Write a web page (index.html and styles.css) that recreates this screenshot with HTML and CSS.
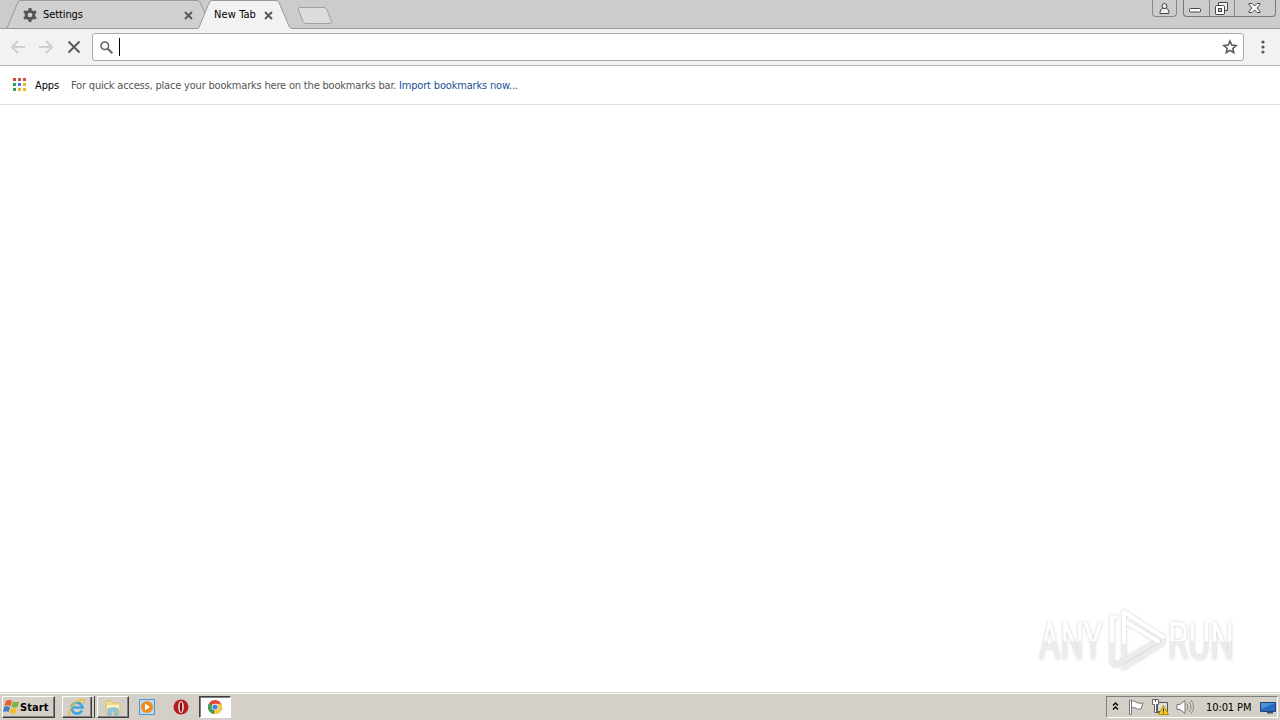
FILE: index.html
```html
<!DOCTYPE html>
<html lang="en">
<head>
  <meta charset="UTF-8">
  <title>New Tab</title>
  <link rel="stylesheet" href="styles.css">
</head>
<body>

  <header class="tabstrip">
    <div class="tab tab-settings">
      <svg class="tab-shape" width="206" height="29" viewBox="0 0 206 29"><path d="M0 28.5H2.500Q4 28.500 5 26L15 2Q16 .5 18 .5H194Q196 .5 197 2L203 15L197.500 28.500Z" fill="#d0d0d0" stroke="#999"/></svg>
      <svg class="gear" width="14" height="14" viewBox="0 0 14 14"><circle cx="7" cy="7" r="3.800" fill="none" stroke="#555" stroke-width="3"/><path d="M7 0v3M7 11v3M1 3.500l2.500 1.500M10.500 9l2.500 1.500M1 10.500l2.500-1.500M10.500 5l2.500-1.500" stroke="#555" stroke-width="3"/></svg>
      <span class="tab-title">Settings</span>
      <svg class="tab-close" width="9" height="9" viewBox="0 0 9 9"><path d="M1 1l7 7M8 1l-7 7"/></svg>
    </div>
    <div class="tab tab-new">
      <svg class="tab-shape" width="94" height="29" viewBox="0 0 94 29"><path d="M0 29L1 27.500L11 3Q12 .5 14 .5H78Q80 .5 81 2.500L91 26Q92 28.500 94 28.500V29Z" fill="#f2f2f2"/><path d="M0 28.500L1 27.500L11 3Q12 .5 14 .5H78Q80 .5 81 2.500L91 26Q92 28.500 94 28.500" fill="none" stroke="#999"/></svg>
      <span class="tab-title">New Tab</span>
      <svg class="tab-close" width="9" height="9" viewBox="0 0 9 9"><path d="M1 1l7 7M8 1l-7 7"/></svg>
    </div>
    <svg class="add-tab" width="36" height="18" viewBox="0 0 36 18"><path d="M3 .5H27Q29 .5 30 2.500L34.500 14.500Q35 16.500 33 16.500H9Q7 16.500 6 14.500L1.500 3Q.5 .5 3 .5Z" fill="#dcdcdc" stroke="#a0a0a0"/></svg>

    <div class="profile">
      <svg width="13" height="13" viewBox="0 0 13 13"><path d="M4.500 6.500Q2 7 2 10.500V11.500H11V10.500Q11 7 8.500 6.500Z" fill="#eee" stroke="#444"/><circle cx="6.500" cy="4" r="2.500" fill="#eee" stroke="#444"/></svg>
    </div>
    <div class="controls">
      <div class="control"><svg width="13" height="16"><rect x=".5" y="8.500" width="11" height="3.500" rx="1" fill="#fff" stroke="#444"/></svg></div>
      <div class="control"><svg width="13" height="16"><path d="M3.500 5V2.500H12.500V10.500H9" fill="#eee" stroke="#444"/><rect x=".5" y="5.500" width="9" height="9" rx="1" fill="#fff" stroke="#444"/><rect x="3.500" y="8.500" width="3" height="3" fill="#bbb" stroke="#444"/></svg></div>
      <div class="control"><svg width="13" height="16"><path d="M1 3.500H4L6.500 6L9 3.500H12V4.500L9 8L12 11.500V12.500H9L6.500 10L4 12.500H1V11.500L4 8L1 4.500Z" fill="#fff" stroke="#444"/></svg></div>
    </div>
  </header>

  <nav class="toolbar">
    <svg width="16" height="16" viewBox="0 0 16 16"><path d="M15 8H2M8 2L2 8l6 6" fill="none" stroke="#d0d0d0" stroke-width="2"/></svg>
    <svg width="16" height="16" viewBox="0 0 16 16"><path d="M1 8h13M8 2l6 6-6 6" fill="none" stroke="#d0d0d0" stroke-width="2"/></svg>
    <svg width="16" height="16" viewBox="0 0 16 16"><path d="M2.500 2.500l11 11M13.500 2.500l-11 11" stroke="#555" stroke-width="1.800"/></svg>
    <div class="omnibox">
      <svg width="13" height="13" viewBox="0 0 13 13"><circle cx="4.800" cy="4.800" r="3.800" fill="none" stroke="#666" stroke-width="1.600"/><path d="M7.500 7.500l4.800 4.800" stroke="#666" stroke-width="2"/></svg>
      <span class="caret"></span>
      <svg class="star" width="16" height="16" viewBox="0 0 16 16"><path d="M8 2l1.700 4.100 4.500.4-3.400 2.900 1 4.300L8 11.400l-3.800 2.300 1-4.300-3.400-2.900 4.500-.4Z" fill="none" stroke="#555" stroke-width="1.500"/></svg>
    </div>
    <svg class="menu" width="4" height="14" viewBox="0 0 4 14"><g fill="#555"><circle cx="2" cy="2" r="1.600"/><circle cx="2" cy="7" r="1.600"/><circle cx="2" cy="12" r="1.600"/></g></svg>
  </nav>

  <div class="bookmarks">
    <svg width="13" height="13" viewBox="0 0 13 13"><path d="M0 0h3v3H0zM5 0h3v3H5zM10 0h3v3h-3z" fill="#d34a43"/><path d="M0 5h3v3H0zM0 10h3v3H0z" fill="#359c5b"/><path d="M5 5h3v3H5z" fill="#437bdd"/><path d="M10 5h3v3h-3zM5 10h3v3H5zM10 10h3v3h-3z" fill="#e7b72c"/></svg>
    <span class="apps">Apps</span>
    <span class="hint">For quick access, place your bookmarks here on the bookmarks bar.</span>
    <a class="import">Import bookmarks now...</a>
  </div>

  <main>
    <svg class="watermark" width="200" height="68" viewBox="0 0 200 68">
      <defs>
        <linearGradient id="split" x1="0" y1="16" x2="0" y2="54" gradientUnits="userSpaceOnUse">
          <stop offset=".5" stop-color="#fff"/>
          <stop offset=".5" stop-color="#ececec"/>
        </linearGradient>
      </defs>
      <g class="letters" fill="url(#split)">
        <text x="2" y="53" textLength="64" lengthAdjust="spacingAndGlyphs">ANY</text>
        <text x="131" y="53" textLength="66" lengthAdjust="spacingAndGlyphs">RUN</text>
      </g>
      <g fill="none" stroke="#ececec" stroke-width="4" stroke-linejoin="round" stroke-linecap="round">
        <path d="M126 34V37L86 62M121 35L79 59M87 37V52M75 36V57L79 59"/>
      </g>
      <g fill="none" stroke="#fff" stroke-width="4" stroke-linejoin="round" stroke-linecap="round">
        <path d="M79 11L75 12V35M87 36V6L126 31M87 15L121 35"/>
      </g>
    </svg>
  </main>

  <footer class="taskbar">
    <div class="start">
      <svg width="17" height="16" viewBox="0 0 17 16"><path d="M3 2Q6 0 9 2L7.500 7Q5 5.500 1.500 7Z" fill="#e65b27"/><path d="M10 2.500Q13 4 16 2.500L14.500 8Q11.500 9 8.500 7.500Z" fill="#75b642"/><path d="M1 8Q4 6.500 7 8L5.500 13Q3 11.500 0 13Z" fill="#397fc1"/><path d="M8 8.500Q11 10 14 9L12.500 14Q9.500 15.500 6.500 13.500Z" fill="#f4be2c"/></svg>
      <span>Start</span>
    </div>
    <div class="task raised stacked">
      <svg width="18" height="18" viewBox="0 0 18 18"><path d="M14 12.500A5.500 5.500 0 1 1 14.500 9.500H5" fill="none" stroke="#3ba6df" stroke-width="2.600"/><path d="M2 16.500C-2 14 8 1 15 1.500Q18 2 15 6" fill="none" stroke="#edbd35" stroke-width="1.500"/></svg>
    </div>
    <div class="task raised">
      <svg width="18" height="18" viewBox="0 0 18 18"><path d="M2 3h5l1 2h8v10H2z" fill="#efdc92" stroke="#dcc36e"/><path d="M3 7h12v4H3z" fill="#fff4bd"/><path d="M4 17v-5q0-2 2-2h6q2 0 2 2v5h-3v-4H7v4z" fill="#8fcdeb" stroke="#599ebb" stroke-width=".6"/></svg>
    </div>
    <div class="task">
      <svg width="16" height="16" viewBox="0 0 16 16"><path d="M.5 .5h15v15H.5z" fill="#b9dcf4" stroke="#5095cb"/><circle cx="8" cy="8" r="6" fill="#ef8d1d"/><path d="M6 4.500l5 3.500-5 3.500z" fill="#fff"/></svg>
    </div>
    <div class="task">
      <svg width="16" height="16" viewBox="0 0 16 16"><circle cx="8" cy="8" r="7.500" fill="#b51c20"/><ellipse cx="8" cy="8" rx="2.800" ry="6" fill="#eee"/><ellipse cx="8" cy="8" rx="1.300" ry="5" fill="#8b1014"/></svg>
    </div>
    <div class="task pressed">
      <svg width="14" height="14" viewBox="0 0 14 14"><circle cx="7" cy="7" r="7" fill="#e44536"/><path d="M7 7L1 3.500A7 7 0 0 0 6 14Z" fill="#35a353"/><path d="M7 7h7A7 7 0 0 1 6 14Z" fill="#f7cb3b"/><path d="M7 3.800h6.200A7 7 0 0 1 14 7H7z" fill="#f7cb3b"/><circle cx="7" cy="7" r="3.300" fill="#fff"/><circle cx="7" cy="7" r="2.600" fill="#4285dc"/></svg>
    </div>

    <div class="tray">
      <svg width="7" height="11" viewBox="0 0 7 11"><path d="M1 3.500L3.500 1 6 3.500M1 7.500L3.500 5 6 7.500" fill="none" stroke="#000" stroke-width="1.400"/></svg>
      <svg class="flag" width="16" height="16" viewBox="0 0 16 16"><path d="M3 2.500Q6 1 8 3Q10 5 15 4L13 10Q9 11 7.500 9Q5 8 3 9Z" fill="#fff" stroke="#777"/><path d="M1.500 1v14.500h2V1z" fill="#fff" stroke="#777"/></svg>
      <svg class="net" width="17" height="16" viewBox="0 0 17 16"><path d="M5.500 3.500h10v9h-10z" fill="#ddd" stroke="#555"/><path d="M.5 .5h6v5h-2v8h-2v-8h-2z" fill="#fff" stroke="#666"/><path d="M3.500 0v3M4 13.500h4" stroke="#555"/><path d="M11.500 6.500L16.500 15.500h-10z" fill="#f6cc22" stroke="#b98d09"/><path d="M11.500 9.500v3M11.500 13.500v1" stroke="#222"/></svg>
      <svg class="speaker" width="18" height="16" viewBox="0 0 18 16"><path d="M1 5.500h3l5-4v13l-5-4H1z" fill="#fff" stroke="#777"/><path d="M11 5q2 3 0 6M13 3q4 5 0 10M15 1q5 7 0 14" fill="none" stroke="#888"/></svg>
      <span class="clock">10:01 PM</span>
      <svg class="show-desktop" width="16" height="13" viewBox="0 0 16 13"><path d="M.5 1.500h15v9H.5z" fill="#286bc0" stroke="#24446f"/><path d="M1 2h14L1 8z" fill="#4c91dc"/><path d="M7 11.500h6" stroke="#334e70" stroke-width="2"/></svg>
    </div>
  </footer>

</body>
</html>
```
FILE: styles.css
```css
* {
  box-sizing: border-box;
}
body {
  margin: 0;
  height: 720px;
  display: flex;
  flex-direction: column;
  overflow: hidden;
  background: #fff;
  font-family: "DejaVu Sans Condensed", "DejaVu Sans", sans-serif;
  font-stretch: condensed;
  font-size: 11px;
  color: #000;
}
svg {
  display: block;
  flex: none;
}
.tabstrip {
  height: 29px;
  flex: none;
  display: flex;
  align-items: flex-start;
  background: #ccc;
  border-bottom: 1px solid #999;
}
.tab {
  position: relative;
  height: 29px;
  display: flex;
  align-items: center;
}
.tab-shape {
  position: absolute;
  left: 0;
  top: 0;
}
.tab > :not(.tab-shape) {
  position: relative;
}
.tab-settings {
  width: 195px;
  margin-left: 3px;
  padding: 0 5px 0 20px;
}
.tab-new {
  width: 94px;
  padding: 0 19px 0 16px;
  z-index: 1;
}
.tab-title {
  flex: 1;
  white-space: nowrap;
  letter-spacing: -0.1px;
}
.tab-new .tab-title {
  letter-spacing: 0.1px;
}
.gear {
  margin-right: 6px;
}
.tab-close {
  margin-top: 1px;
  stroke: #555;
  stroke-width: 1.8;
}
.add-tab {
  margin: 7px 0 0 5px;
}
.profile {
  width: 25px;
  height: 17px;
  margin-left: auto;
  display: flex;
  justify-content: center;
  align-items: center;
  border: 1px solid #888;
  border-top: 0;
  border-radius: 0 0 4px 4px;
}
.controls {
  display: flex;
  margin: 0 4px 0 6px;
  border: 1px solid #777;
  border-top: 0;
  border-radius: 0 0 4px 4px;
}
.control {
  width: 25px;
  height: 16px;
  padding-right: 2px;
  display: flex;
  justify-content: center;
}
.control + .control {
  border-left: 1px solid #888;
}
.control:last-child {
  width: 41px;
}
.toolbar {
  height: 37px;
  flex: none;
  display: flex;
  align-items: center;
  gap: 12px;
  padding: 0 15px 0 10px;
  background: #f2f2f2;
  border-bottom: 1px solid #b6b6b6;
}
.omnibox {
  flex: 1;
  height: 28px;
  margin-left: -2px;
  padding: 0 5px 0 7px;
  display: flex;
  align-items: center;
  background: #fff;
  border: 1px solid #aaa;
  border-radius: 3px;
}
.caret {
  width: 1px;
  height: 18px;
  margin-left: 6px;
  background: #000;
}
.star {
  margin-left: auto;
}
.menu {
  margin-left: 5px;
}
.bookmarks {
  height: 39px;
  flex: none;
  display: flex;
  align-items: center;
  padding-left: 13px;
  border-bottom: 1px solid #e0e0e0;
  white-space: nowrap;
}
.bookmarks svg {
  margin-top: -1px;
}
.apps {
  width: 36px;
  margin-left: 9px;
  letter-spacing: -0.1px;
}
.hint {
  width: 328px;
  color: #555;
  letter-spacing: -0.19px;
}
.import {
  color: #1e5098;
  letter-spacing: -0.17px;
}
main {
  flex: 1;
  display: flex;
  justify-content: flex-end;
  align-items: flex-end;
  padding: 0 43px 18px 0;
}
.watermark {
  overflow: visible;
  filter: drop-shadow(0 0 1.5px #ccc);
}
.letters {
  font: 51px Roboto, sans-serif;
}
.taskbar {
  height: 28px;
  flex: none;
  display: flex;
  align-items: center;
  padding: 1px 2px 0 2px;
  background: #d4d0c8;
  border-top: 1px solid #d4d0c8;
  box-shadow: inset 0 1px #fff;
}
.start {
  width: 53px;
  height: 22px;
  margin-right: 7px;
  padding-left: 0;
  display: flex;
  align-items: center;
  font-weight: bold;
  letter-spacing: 0.1px;
  border: 1px solid;
  border-color: #fff #404040 #404040 #fff;
  box-shadow: inset -1px -1px #808080;
}
.task {
  width: 32px;
  height: 22px;
  margin-right: 2px;
  display: flex;
  align-items: center;
  justify-content: center;
}
.raised {
  border: 1px solid;
  border-color: #fff #404040 #404040 #fff;
  box-shadow: inset -1px -1px #808080;
}
.stacked {
  width: 33px;
  border-right: 4px double #404040;
}
.pressed {
  background: #fff;
  border: 1px solid;
  border-color: #404040 #fff #fff #404040;
  box-shadow: inset 1px 1px #808080;
}
.tray {
  width: 172px;
  height: 22px;
  margin-left: auto;
  padding-left: 5px;
  display: flex;
  align-items: center;
  border: 1px solid;
  border-color: #808080 #fff #fff #808080;
}
.flag {
  margin-left: 9px;
}
.net {
  margin-left: 8px;
}
.speaker {
  margin-left: 7px;
}
.clock {
  width: 54px;
  margin-left: 12px;
  white-space: nowrap;
  letter-spacing: -0.1px;
}
```
